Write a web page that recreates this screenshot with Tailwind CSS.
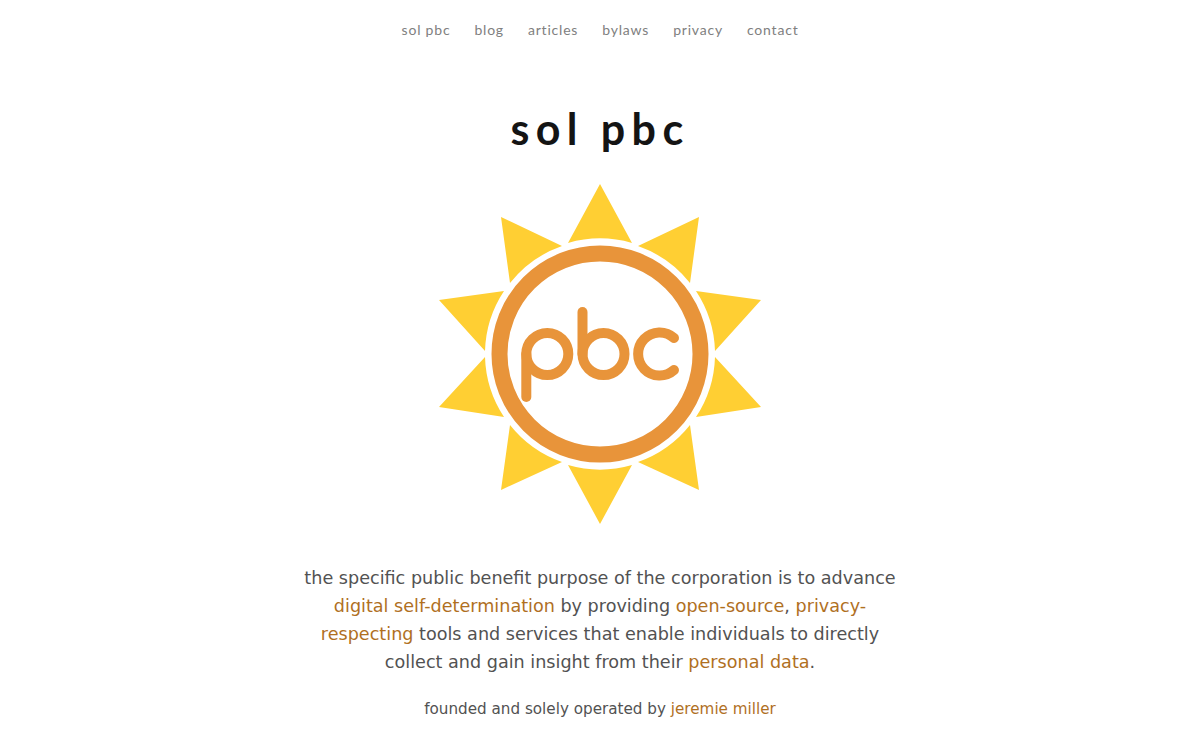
<!DOCTYPE html>
<html>
<head>
  <title>sol pbc</title>
  <script src="https://cdn.jsdelivr.net/npm/@tailwindcss/browser@4"></script>
</head>
<body class="bg-white font-['DejaVu_Sans',sans-serif] text-[#525252]">
  <nav class="flex justify-center gap-6 pt-[21px] h-[40px] text-[14px] leading-[18px] tracking-[0.8px] text-[#808080] font-['Lato',sans-serif]">
    <a href="#">sol pbc</a>
    <a href="#">blog</a>
    <a href="#">articles</a>
    <a href="#">bylaws</a>
    <a href="#">privacy</a>
    <a href="#">contact</a>
  </nav>

  <h1 class="mt-[65px] text-center text-[43px] leading-[48px] tracking-[6.4px] font-bold text-[#141414] font-['Lato',sans-serif]">sol pbc</h1>

  <svg class="block mx-auto mt-[31px]" width="340" height="340" viewBox="-170 -170 340 340">
    <g fill="#ffcf33">
      <path d="M-32 -111L0 -170L32 -111A115 115 0 0 0 -32 -111Z M38 -108L99 -137L90 -71A115 115 0 0 0 38 -108Z M96 -63L161 -54L115 -3A115 115 0 0 0 96 -63Z" />
      <path d="M-38 -108L-99 -137L-90 -71A115 115 0 0 1 -38 -108Z M-96 -63L-161 -54L-115 -3A115 115 0 0 1 -96 -63Z" />
      <path d="M-32 111L0 170L32 111A115 115 0 0 1 -32 111Z M38 108L99 136L90 71A115 115 0 0 1 38 108Z M96 63L161 53L115 3A115 115 0 0 1 96 63Z" />
      <path d="M-38 108L-99 136L-90 71A115 115 0 0 0 -38 108Z M-96 63L-161 53L-115 3A115 115 0 0 0 -96 63Z" />
    </g>
    <g fill="none" stroke="#e8943a" stroke-linecap="round">
      <circle cx="0" cy="0" r="100.5" stroke-width="16" />
      <g stroke-width="10">
        <circle cx="-52.7" cy="0" r="21" />
        <path d="M-73.7 0V43" />
        <circle cx="3.5" cy="0" r="21" />
        <path d="M-17.5 0V-42" />
        <path d="M74 -16A21.5 21.5 0 1 0 74 16" />
      </g>
    </g>
  </svg>

  <p class="mx-auto mt-[40px] w-[600px] text-center text-[17.6px] leading-[28px]">
    the specific public benefit purpose of the corporation is to advance
    <a href="#" class="text-[#b0701f]">digital self-determination</a> by providing
    <a href="#" class="text-[#b0701f]">open-source</a>,
    <a href="#" class="text-[#b0701f]">privacy-respecting</a> tools and services that enable individuals to directly
    collect and gain insight from their <a href="#" class="text-[#b0701f]">personal data</a>.
  </p>

  <p class="mt-[21px] text-center text-[15.2px] leading-[24px]">
    founded and solely operated by <a href="#" class="text-[#b0701f]">jeremie miller</a>
  </p>
</body>
</html>
